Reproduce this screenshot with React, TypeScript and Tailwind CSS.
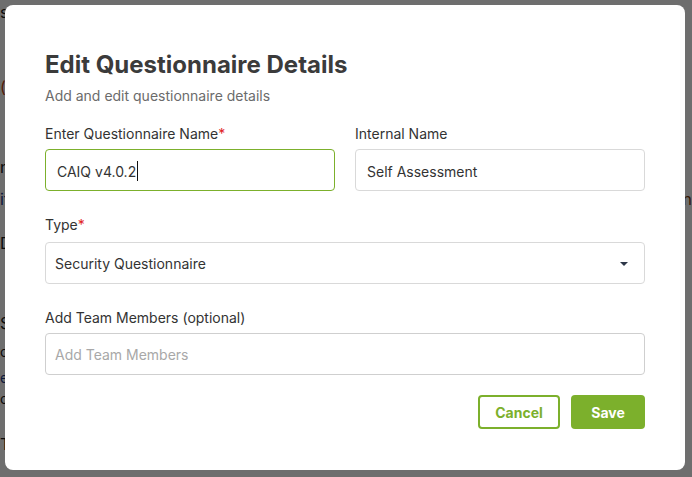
import React from "react";

const font = { fontFamily: "Inter, 'Noto Sans', sans-serif" };

function Label({ text, required }: { text: string; required?: boolean }) {
  return (
    <div className="text-[14px] leading-[20px] text-[#333333]">
      {text}
      {required && <span className="text-[#e02424]">*</span>}
    </div>
  );
}

export default function App() {
  return (
    <div className="relative h-[477px] w-[692px] overflow-hidden bg-white" style={font}>
      {/* page behind the dialog */}
      <div className="flex flex-col text-[16px] leading-[20px] text-[#1a1a1a]">
        <div className="mt-[2px]">system</div>
        <div className="mt-[55px] text-[#c2410c]">(</div>
        <div className="mt-[60px] flex justify-between">
          <span>n</span>
        </div>
        <div className="mt-[12px] flex justify-between">
          <span className="text-[#1e3a8a]">if</span>
          <span className="text-[#7c3a0a]">n</span>
        </div>
        <div className="mt-[24px]">D</div>
        <div className="mt-[60px]">S</div>
        <div className="mt-[9px] text-[14px]">c</div>
        <div className="mt-[6px] text-[14px] text-[#1e3a8a]">e</div>
        <div className="mt-[1px] text-[14px]">o</div>
        <div className="mt-[25px]">T</div>
      </div>

      {/* overlay */}
      <div className="absolute inset-0 bg-[rgba(0,0,0,0.57)] p-[5px]">
        <div className="w-[680px] rounded-[8px] bg-white px-[40px] pb-[41px] pt-[45px]">
          <h1 className="text-[24px] font-bold leading-[30px] text-[#3b3b3b]">
            Edit Questionnaire Details
          </h1>
          <p className="mt-[6px] text-[14px] leading-[20px] text-[#6b6b6b]">
            Add and edit questionnaire details
          </p>

          <div className="mt-[18px] grid grid-cols-2 gap-x-[20px]">
            <div className="flex flex-col gap-[5px]">
              <Label text="Enter Questionnaire Name" required />
              <div className="flex h-[42px] items-center rounded-[4px] border border-[#7cb02c] px-[11px] pt-[2px] text-[14px] text-[#333333]">
                CAIQ v4.0.2
                <span className="ml-[1px] inline-block h-[20px] w-[1px] bg-[#111111]" />
              </div>
            </div>
            <div className="flex flex-col gap-[5px]">
              <Label text="Internal Name" />
              <div className="flex h-[42px] items-center rounded-[4px] border border-[#d9d9d9] px-[11px] pt-[2px] text-[14px] text-[#333333]">
                Self Assessment
              </div>
            </div>
          </div>

          <div className="mt-[24px] flex flex-col gap-[7px]">
            <Label text="Type" required />
            <div className="flex h-[42px] items-center justify-between rounded-[4px] border border-[#d9d9d9] pl-[9px] pr-[15px] pt-[1px] text-[14px] text-[#333333]">
              <span>Security Questionnaire</span>
              <svg width="10" height="6" viewBox="0 0 10 6">
                <path d="M1 1 L9 1 L5 5 Z" fill="#2d3748" />
              </svg>
            </div>
          </div>

          <div className="mt-[24px] flex flex-col gap-[5px]">
            <Label text="Add Team Members (optional)" />
            <div className="flex h-[42px] items-center rounded-[4px] border border-[#cfcfcf] px-[9px] pt-[1px] text-[14px] text-[#a8a8a8]">
              Add Team Members
            </div>
          </div>

          <div className="mt-[20px] flex justify-end gap-[11px]">
            <button className="h-[34px] w-[82px] rounded-[4px] border-2 border-[#7cb02c] bg-white text-[14px] font-bold text-[#7cb02c]">
              Cancel
            </button>
            <button className="h-[34px] w-[74px] rounded-[4px] bg-[#7cb02c] text-[14px] font-bold text-white">
              Save
            </button>
          </div>
        </div>
      </div>
    </div>
  );
}
